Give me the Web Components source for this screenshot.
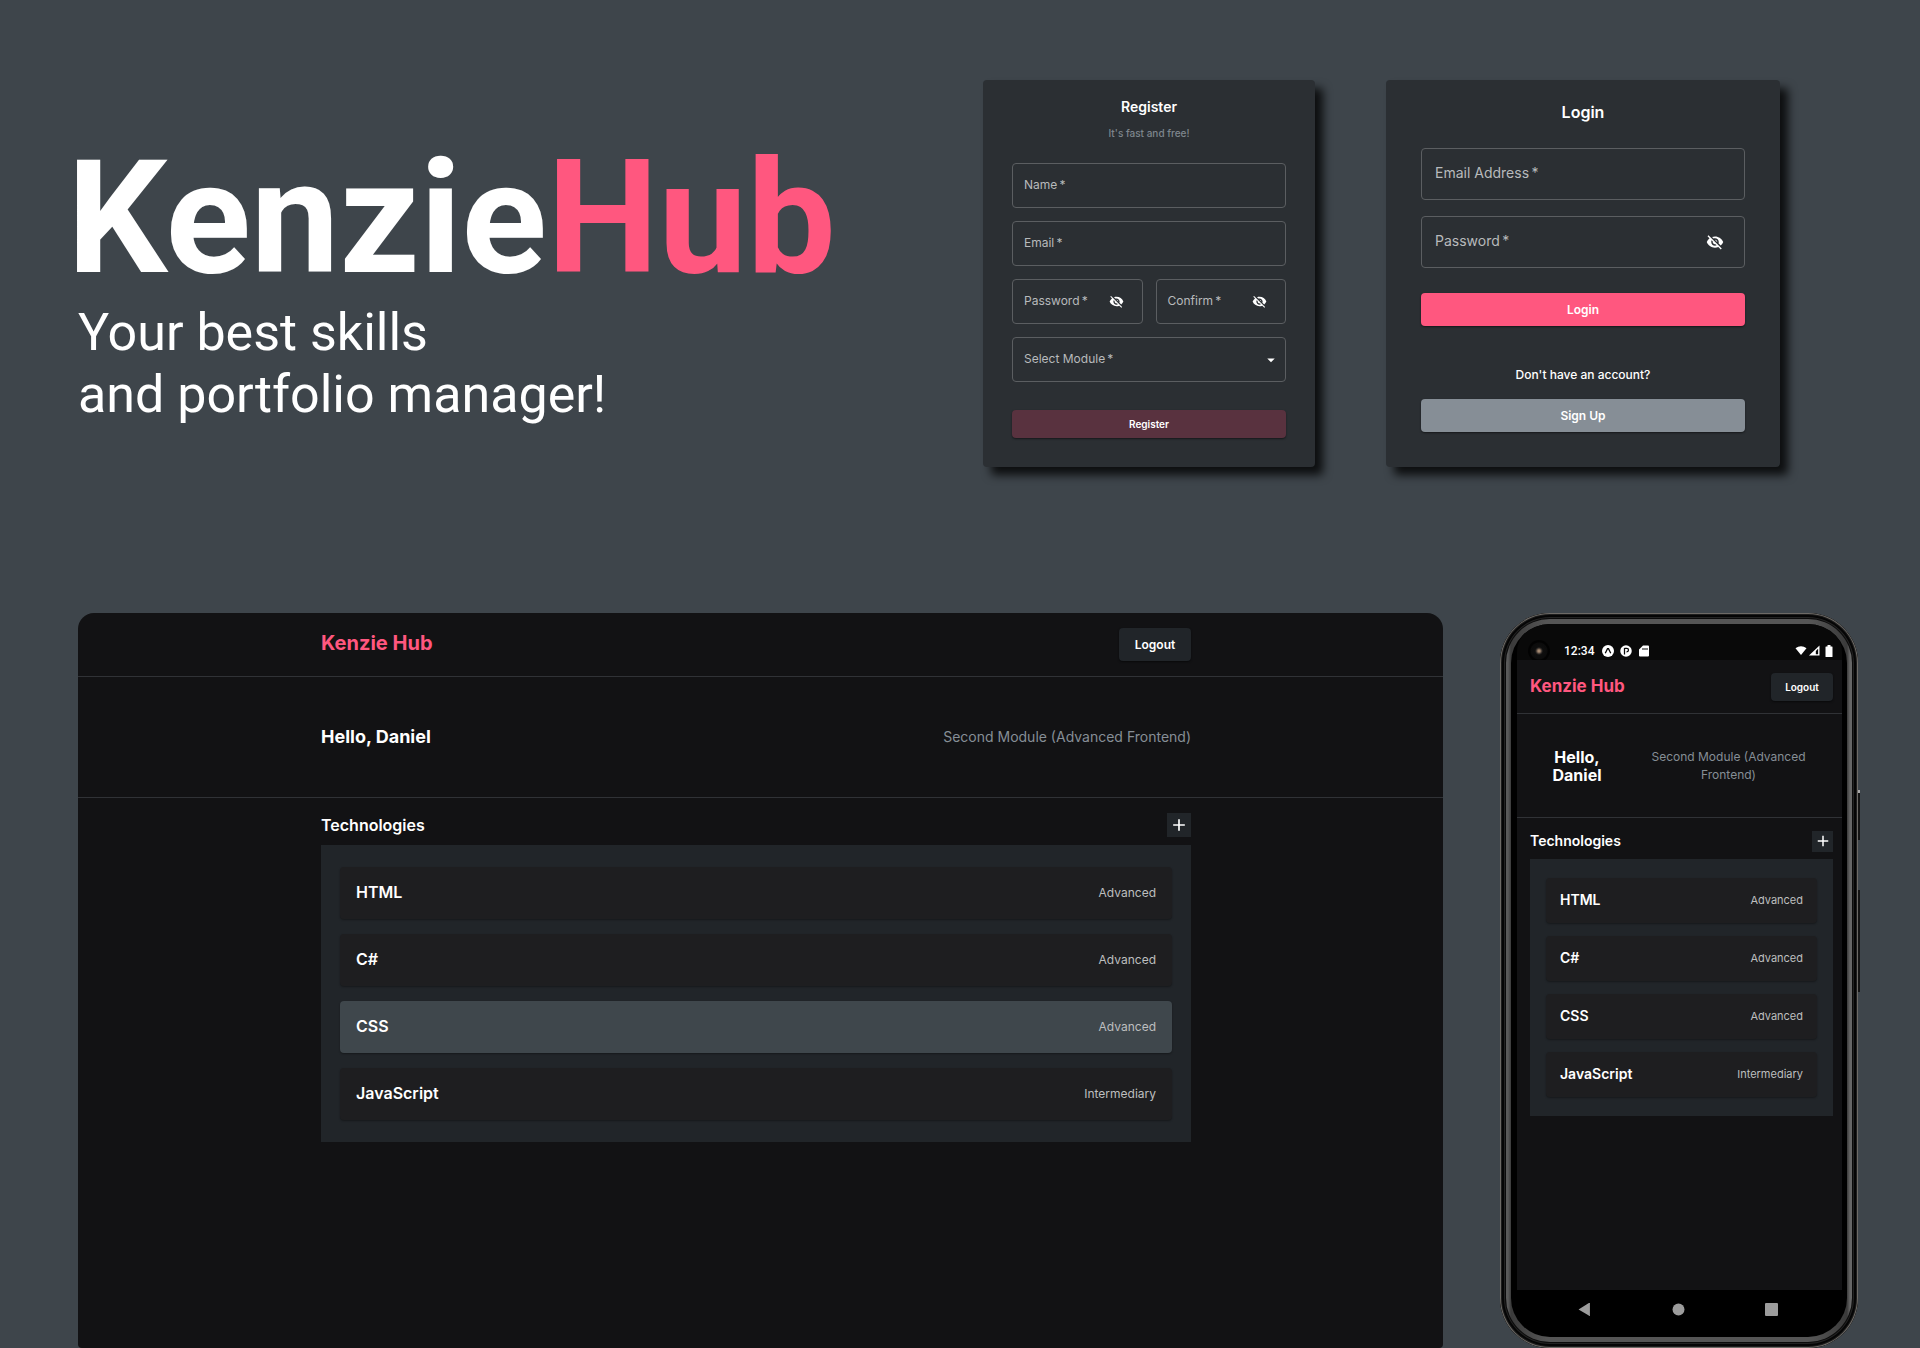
<!DOCTYPE html>
<html lang="en">
<head>
<meta charset="utf-8">
<title>KenzieHub</title>
<style>
  body { margin: 0; background: #3e454b; font-family: Inter, "Liberation Sans", sans-serif; color: #fff; }
</style>
</head>
<body>
<kenzie-showcase></kenzie-showcase>

<script>
const define = (name, html) => customElements.define(name, class extends HTMLElement {
  connectedCallback() {
    if (this.shadowRoot) return;
    const root = this.attachShadow({ mode: "open" });
    root.innerHTML = typeof html === "function" ? html(this) : html;
  }
});

/* Icons */
const ICONS = {
  eyeOff: `<svg viewBox="0 0 24 24" fill="currentColor"><path d="M12 7c2.760 0 5 2.240 5 5 0 .650-.130 1.260-.360 1.830l2.920 2.920c1.510-1.260 2.700-2.890 3.430-4.750-1.730-4.390-6-7.500-11-7.500-1.400 0-2.740.250-3.980.700l2.160 2.160C10.740 7.130 11.350 7 12 7zM2 4.270l2.280 2.280.460.460C3.080 8.300 1.780 10.020 1 12c1.730 4.390 6 7.500 11 7.500 1.550 0 3.030-.300 4.380-.840l.420.420L19.730 22 21 20.730 3.270 3 2 4.270zM7.530 9.800l1.550 1.550c-.050.210-.080.430-.080.650 0 1.660 1.340 3 3 3 .220 0 .440-.030.650-.080l1.550 1.550c-.670.330-1.410.530-2.200.530-2.760 0-5-2.240-5-5 0-.790.200-1.530.530-2.200zm4.310-.780l3.150 3.150.020-.160c0-1.660-1.340-3-3-3l-.170.010z"/></svg>`,
  plus: `<svg viewBox="0 0 24 24" fill="currentColor"><path d="M19 13h-6v6h-2v-6H5v-2h6V5h2v6h6v2z"/></svg>`,
  caret: `<svg viewBox="0 0 24 24" fill="currentColor"><path d="M7 10l5 5 5-5z"/></svg>`,
  expo: `<svg viewBox="0 0 24 24"><circle cx="12" cy="12" r="12" fill="#fff"/><path d="M6.500 16.500 11 7.500h2l4.500 9" fill="none" stroke="#090909" stroke-width="2.600"/></svg>`,
  ring: `<svg viewBox="0 0 24 24"><circle cx="12" cy="12" r="11.500" fill="#fff"/><path d="M9 6v13M9 6.500h4.500a3.500 3.500 0 0 1 0 7H13" fill="none" stroke="#090909" stroke-width="2.500"/></svg>`,
  card: `<svg viewBox="0 0 24 24" fill="#fff"><path fill-rule="evenodd" d="M10 1h10a2 2 0 0 1 2 2v18a2 2 0 0 1-2 2H4a2 2 0 0 1-2-2V9zM9 6v4h2V6zm4 0v4h2V6zm4 0v4h2V6z"/></svg>`,
  wifi: `<svg viewBox="0 0 24 24" fill="#fff"><path d="M12 22 0 7C7 1 17 1 24 7z"/></svg>`,
  signal: `<svg viewBox="0 0 24 24" fill="#fff"><path fill-rule="evenodd" d="M24 1v22H1zM21 8l-5 5v7h5z"/></svg>`,
  battery: `<svg viewBox="0 0 16 24" fill="#fff"><path d="M5 0h6v3h3a1 1 0 0 1 1 1v19a1 1 0 0 1-1 1H2a1 1 0 0 1-1-1V4a1 1 0 0 1 1-1h3z"/></svg>`,
  back: `<svg viewBox="0 0 24 24" fill="#9c9c9c"><path d="M22 1v22a1 1 0 0 1-2 0L1 12 20 0a1 1 0 0 1 2 1z"/></svg>`,
  home: `<svg viewBox="0 0 24 24" fill="#9c9c9c"><circle cx="12" cy="12" r="11"/></svg>`,
  recent: `<svg viewBox="0 0 24 24" fill="#9c9c9c"><rect width="24" height="24" rx="2"/></svg>`
};
define("kh-icon", el => `<style>:host{display:block;flex:none}svg{display:block;width:100%;height:100%}</style>${ICONS[el.getAttribute("name")]}`);

/* Button */
define("kh-button", `<style>
  :host{display:block}
  button{display:block;width:100%;height:var(--control,33px);margin:0;padding:0;border:0;border-radius:4px;
    background:var(--fill,#212529);color:#fff;font:600 var(--size,12px)/16px Inter,"Liberation Sans",sans-serif;
    box-shadow:0 1px 2px rgba(0,0,0,.5)}
</style><button type="button"><slot></slot></button>`);

/* Outlined form field whose label rests inside the box */
let fieldCount = 0;
define("kh-field", el => {
  const id = "f" + (++fieldCount), kind = el.getAttribute("kind") || "text";
  const control = kind === "select"
    ? `<select id="${id}"><option value=""></option></select>`
    : `<input id="${id}" type="${kind}">`;
  const icon = kind === "select" ? `<kh-icon class="caret" name="caret"></kh-icon>`
    : kind === "password" ? `<button type="button" aria-label="Show password"><kh-icon class="eye" name="eyeOff"></kh-icon></button>` : "";
  return `<style>
    :host{display:block;min-width:0;flex:1}
    .box{display:grid;align-items:center;box-sizing:border-box;height:var(--field,45px);border:1px solid #5b5e61;border-radius:4px}
    .box>*{grid-area:1/1}
    label{padding:0 var(--inset,11px) 2px;font-size:var(--label,12px);line-height:16px;color:#b8babc;white-space:nowrap;pointer-events:none}
    input,select{appearance:none;width:100%;height:100%;min-width:0;margin:0;padding:0 12px;border:0;background:none;color:#fff;font:inherit;outline:0}
    button{justify-self:end;margin:0 var(--eye-inset,18px) 0 0;padding:0;border:0;background:none;color:#fff}
    .eye{width:var(--eye,15px);height:var(--eye,15px)}
    .caret{justify-self:end;width:18px;height:18px;margin-right:5px;pointer-events:none}
  </style><div class="box">${control}<label for="${id}">${el.getAttribute("label")}&#8201;*</label>${icon}</div>`;
});

/* Form cards */
define("kh-panel", `<style>
  :host{display:block;box-sizing:border-box;background:#2b2f33;border-radius:4px;box-shadow:8px 8px 10px rgba(0,0,0,.8)}
</style><slot></slot>`);

define("register-form", `<style>
  :host{display:block;flex:0 0 332px}
  kh-panel{height:100%;padding:18px 29px 0}
  h2{margin:0;text-align:center;font-size:14px;line-height:17px;font-weight:600}
  p{margin:11px 0 23px;text-align:center;font-size:10px;line-height:14px;font-weight:500;color:#7e868d}
  form,.pair{display:flex;gap:13px}
  form{flex-direction:column}
  kh-button{--control:28px;--fill:#59323f;--size:10px;margin-top:15px}
</style>
<kh-panel><h2>Register</h2><p>It's fast and free!</p>
<form>
  <kh-field label="Name"></kh-field>
  <kh-field label="Email" kind="email"></kh-field>
  <div class="pair"><kh-field label="Password" kind="password"></kh-field><kh-field label="Confirm" kind="password"></kh-field></div>
  <kh-field label="Select Module" kind="select"></kh-field>
  <kh-button>Register</kh-button>
</form></kh-panel>`);

define("login-form", `<style>
  :host{display:block;flex:0 0 394px}
  kh-panel{height:100%;padding:22px 35px 0}
  h2{margin:0 0 26px;text-align:center;font-size:16px;line-height:20px;font-weight:600}
  form{display:flex;flex-direction:column;gap:16px;--field:52px;--label:14px;--inset:13px;--eye:18px;--eye-inset:20px}
  .go{--fill:#ff577f;margin-top:9px}
  .join{--fill:#868e96}
  p{margin:40px 0 16px;text-align:center;font-size:12px;line-height:17px;font-weight:500}
</style>
<kh-panel><h2>Login</h2>
<form>
  <kh-field label="Email Address" kind="email"></kh-field>
  <kh-field label="Password" kind="password"></kh-field>
  <kh-button class="go">Login</kh-button>
</form>
<p>Don't have an account?</p>
<kh-button class="join">Sign Up</kh-button></kh-panel>`);

/* Technology row */
define("tech-item", el => `<style>
  :host{display:flex;align-items:center;justify-content:space-between;box-sizing:border-box;height:var(--row,52px);padding:0 var(--row-pad,16px) 2px;
    border-radius:4px;background:#1e1e20;box-shadow:0 1px 2px rgba(0,0,0,.35)}
  :host([active]){background:#3f474c}
  h4{margin:0;font-size:var(--name,16px);line-height:20px;font-weight:600}
  span{padding-top:1px;font-size:var(--level,12px);line-height:16px;color:#bdbebf}
</style><h4>${el.getAttribute("name")}</h4><span>${el.getAttribute("level")}</span>`);

/* Dashboard, shared by the desktop window and the phone */
define("hub-dashboard", el => {
  const phone = el.hasAttribute("compact");
  const items = [["HTML", "Advanced"], ["C#", "Advanced"], ["CSS", "Advanced"], ["JavaScript", "Intermediary"]];
  return `<style>
  :host{display:block;background:#121214;--gutter:9px}
  header,section{padding-right:var(--gutter)}
  .wrap{display:flex;align-items:center;justify-content:space-between;width:870px;margin:0 auto}
  header,.intro{border-bottom:1px solid #303236}
  header .wrap{height:63px}
  .intro .wrap{height:120px}
  h1{margin:0;padding-bottom:3px;font-size:20px;line-height:24px;font-weight:700;color:#ff577f}
  h2{margin:0;font-size:18px;line-height:22px;font-weight:700}
  h3{margin:0;font-size:16px;line-height:20px;font-weight:600}
  p{margin:0;font-size:14px;line-height:18px;color:#868e96}
  .logout{width:72px}
  .tech{box-sizing:border-box;height:47px;padding-top:6px}
  .add{display:grid;place-items:center;width:24px;height:24px;margin:0;padding:0;border:0;background:#212529;color:#fff}
  .add kh-icon{width:20px;height:20px}
  .list{display:flex;flex-direction:column;gap:15px;box-sizing:border-box;width:870px;margin:0 auto;padding:22px 19px;background:#212529}
  :host([compact]){--gutter:0px}
  :host([compact]) .wrap{width:auto;margin:0 9px 0 13px}
  :host([compact]) header .wrap{height:53px}
  :host([compact]) .intro .wrap{height:103px;text-align:center}
  :host([compact]) h1{padding-bottom:1px;font-size:17px;line-height:20px}
  :host([compact]) h2{width:94px;font-size:16px;line-height:18px}
  :host([compact]) p{width:209px;box-sizing:border-box;padding:0 24px;font-size:12px}
  :host([compact]) h3{font-size:14px;line-height:18px}
  :host([compact]) .logout{width:62px;--control:28px;--size:10px}
  :host([compact]) .tech{height:41px;padding-top:5px}
  :host([compact]) .add{width:21px;height:21px}
  :host([compact]) .add kh-icon{width:18px;height:18px}
  :host([compact]) .list{width:auto;margin:0 9px 0 13px;padding:19px 16px;gap:13px;--row:45px;--row-pad:14px;--name:14px;--level:11px}
  </style>
  <header><div class="wrap"><h1>Kenzie Hub</h1><kh-button class="logout">Logout</kh-button></div></header>
  <section class="intro"><div class="wrap"><h2>Hello, Daniel</h2><p>Second Module (Advanced Frontend)</p></div></section>
  <section><div class="wrap tech"><h3>Technologies</h3><button class="add" type="button" aria-label="Add technology"><kh-icon name="plus"></kh-icon></button></div>
  <div class="list">${items.map(([n, l]) => `<tech-item name="${n}" level="${l}"${!phone && n === "CSS" ? " active" : ""}></tech-item>`).join("")}</div></section>`;
});

/* Phone frame */
define("phone-mockup", `<style>
  :host{display:block;position:relative;flex:0 0 358px;min-width:0}
  .shell{box-sizing:border-box;height:735px;border-radius:50px;padding:6px;background:#0b0b0b;
    box-shadow:inset 0 0 0 1px #6d6a66,inset 0 0 0 2px #1d1d1d,inset 0 0 0 4px #050505,inset 0 0 0 5px #222}
  .bezel{box-sizing:border-box;height:100%;border-radius:44px;padding:5px;
    background:linear-gradient(90deg,#5a5a5a 0 2px,#3a3a3a 5px,#555 40px calc(100% - 40px),#3a3a3a calc(100% - 5px),#666 calc(100% - 2px))}
  .glass{box-sizing:border-box;height:100%;border-radius:39px;padding:0 5px 0 6px;background:#000;display:flex;flex-direction:column;overflow:hidden}
  .status{display:flex;align-items:center;box-sizing:border-box;height:36px;padding:17px 9px 0 11px;border-radius:28px 28px 0 0;background:#090909;font:500 12px/16px Roboto,sans-serif;flex:none}
  .lens{width:22px;height:22px;margin-right:14px;border-radius:50%;background:radial-gradient(circle,#a68a72 0 1px,#302b28 3px,#0e0e0e 4px,#0b0b0b 8px,#020202 9px)}
  .icons{display:flex;gap:6px;margin-left:8px}
  .icons kh-icon{width:12px;height:12px}
  .right{display:flex;align-items:center;gap:1px;margin-left:auto}
  .right kh-icon{width:12px;height:11px}
  .right kh-icon:last-child{width:8px;height:12px;margin-left:4px}
  hub-dashboard{flex:1}
  nav{display:flex;flex:none;align-items:center;justify-content:space-between;box-sizing:border-box;height:47px;padding:0 64px 9px 61px}
  nav kh-icon{width:13px;height:13px}
  i{position:absolute;right:-2px;width:2px;background:#141414}
  .power{top:177px;height:50px;border-top:3px solid #aaa;box-sizing:border-box}
  .volume{top:277px;height:102px}
</style>
<i class="power"></i><i class="volume"></i>
<div class="shell"><div class="bezel"><div class="glass">
  <div class="status"><div class="lens"></div><span>12:34</span>
    <div class="icons"><kh-icon name="expo"></kh-icon><kh-icon name="ring"></kh-icon><kh-icon name="card"></kh-icon></div>
    <div class="right"><kh-icon name="wifi"></kh-icon><kh-icon name="signal"></kh-icon><kh-icon name="battery"></kh-icon></div></div>
  <hub-dashboard compact></hub-dashboard>
  <nav><kh-icon name="back"></kh-icon><kh-icon name="home"></kh-icon><kh-icon name="recent"></kh-icon></nav>
</div></div></div>`);

/* Page */
define("kenzie-showcase", `<style>
  :host{display:flex;flex-direction:column;box-sizing:border-box;min-height:100vh;padding:80px 62px 0 78px}
  .top{display:flex;height:387px;margin-right:78px}
  .brand{flex:1;min-width:0;font-family:Roboto,sans-serif;white-space:nowrap;padding-top:64px}
  h1{margin:0 0 0 -11px;font-size:158px;line-height:148px;font-weight:700}
  h1 span{color:#ff577f}
  p{margin:10px 0 0;font-size:52px;line-height:62px}
  login-form{margin-left:71px}
  .devices{display:flex;flex:1;gap:57px;margin-top:146px}
  .window{flex:1;border-radius:16px 16px 4px 4px;overflow:hidden}
</style>
<div class="top">
  <div class="brand"><h1>Kenzie<span>Hub</span></h1><p>Your best skills<br>and portfolio manager!</p></div>
  <register-form></register-form><login-form></login-form>
</div>
<div class="devices"><hub-dashboard class="window"></hub-dashboard><phone-mockup></phone-mockup></div>`);
</script>
</body>
</html>
